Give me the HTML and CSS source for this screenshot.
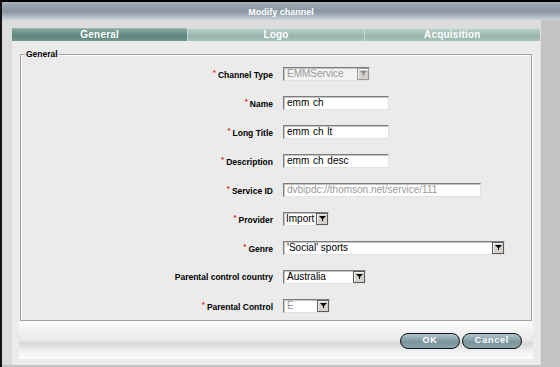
FILE: index.html
```html
<!DOCTYPE html>
<html>
<head>
<meta charset="utf-8">
<title>Modify channel</title>
<link rel="stylesheet" href="styles.css">
</head>
<body>
<div class="window">
  <div class="titlebar">Modify channel</div>
  <div class="dialog">
    <div class="tabs">
      <div class="tab active">General</div>
      <div class="tab">Logo</div>
      <div class="tab">Acquisition</div>
    </div>
    <div class="panel">
      <fieldset class="group">
        <legend>General</legend>
        <div class="form">
          <div class="label"><span class="req">*</span>Channel Type</div>
          <div class="select disabled w-type"><span class="value">EMMService</span><span class="arrow"><svg width="7" height="5" viewBox="0 0 7 5"><polygon points="0,0 7,0 3.5,3.5"/><rect x="3" y="3" width="1" height="2"/></svg></span></div>

          <div class="label"><span class="req">*</span>Name</div>
          <div class="input w-text">emm ch</div>

          <div class="label"><span class="req">*</span>Long Title</div>
          <div class="input w-text">emm ch lt</div>

          <div class="label"><span class="req">*</span>Description</div>
          <div class="input w-text">emm ch desc</div>

          <div class="label"><span class="req">*</span>Service ID</div>
          <div class="input disabled w-sid">dvbipdc://thomson.net/service/111</div>

          <div class="label"><span class="req">*</span>Provider</div>
          <div class="select w-prov"><span class="value">Import</span><span class="arrow"><svg width="7" height="5" viewBox="0 0 7 5"><polygon points="0,0 7,0 3.5,3.5"/><rect x="3" y="3" width="1" height="2"/></svg></span></div>

          <div class="label"><span class="req">*</span>Genre</div>
          <div class="select w-genre"><span class="value">'Social' sports</span><span class="arrow"><svg width="7" height="5" viewBox="0 0 7 5"><polygon points="0,0 7,0 3.5,3.5"/><rect x="3" y="3" width="1" height="2"/></svg></span></div>

          <div class="label">Parental control country</div>
          <div class="select w-country"><span class="value">Australia</span><span class="arrow"><svg width="7" height="5" viewBox="0 0 7 5"><polygon points="0,0 7,0 3.5,3.5"/><rect x="3" y="3" width="1" height="2"/></svg></span></div>

          <div class="label"><span class="req">*</span>Parental Control</div>
          <div class="select greytext w-pc"><span class="value">E</span><span class="arrow"><svg width="7" height="5" viewBox="0 0 7 5"><polygon points="0,0 7,0 3.5,3.5"/><rect x="3" y="3" width="1" height="2"/></svg></span></div>
        </div>
      </fieldset>
      <div class="buttonbar">
        <button class="pill" type="button">OK</button>
        <button class="pill" type="button">Cancel</button>
      </div>
    </div>
  </div>
</div>
</body>
</html>
```

FILE: styles.css
```css
* { box-sizing: border-box; }
html, body { margin: 0; padding: 0; }
body {
  width: 560px;
  height: 367px;
  overflow: hidden;
  background: #c3c3c3;
  font-family: "Liberation Sans", Arial, sans-serif;
}
.window {
  height: 367px;
  border-left: 2px solid #141414;
}
.titlebar {
  height: 20px;
  border-top: 2px solid #000;
  background: linear-gradient(#a6afba, #8d99a7 40%, #8c98a6 55%, #a9b2bc 75%, #ced3d8);
  color: #fff;
  font-weight: bold;
  font-size: 9px;
  line-height: 20px;
  text-align: center;
}
.dialog {
  width: 539px;
  height: 345px;
  background: #dcdcdc;
  padding: 8px 1px 0 10px;
}
.tabs {
  display: flex;
  height: 13px;
}
.tab {
  flex: 1;
  color: #fff;
  font-weight: bold;
  font-size: 10px;
  line-height: 12px;
  letter-spacing: 0.2px;
  text-align: center;
  border-top: 1px solid #d2dfdc;
  background: linear-gradient(#b9cec8, #a1bcb5 45%, #97b4ac 60%, #a9c3bc);
}
.tab + .tab { border-left: 1px solid #c9d9d5; }
.tab.active {
  border-top-color: #9ab5ae;
  background: linear-gradient(#86a79f, #658d83 45%, #5a847a 60%, #739a90);
}
.panel {
  height: 324px;
  background: #ebebeb;
  padding: 8px 8px 6px 8px;
}
.group {
  margin: 0;
  padding: 0;
  min-width: 0;
  border: 1px solid #a0a0a0;
  box-shadow: inset 1px 1px 0 #fafafa, 1px 1px 0 #fafafa;
}
.group legend {
  margin-left: 4px;
  padding: 0 1px;
  font-weight: bold;
  font-size: 8.5px;
  line-height: 10px;
  color: #000;
}
.form {
  display: grid;
  grid-template-columns: 252px 1fr;
  column-gap: 10px;
  grid-auto-rows: 29px;
  align-items: center;
}
.label {
  text-align: right;
  font-weight: bold;
  font-size: 8.5px;
  color: #000;
  white-space: nowrap;
}
.req {
  color: #e01b1b;
  font-size: 8px;
  vertical-align: 3px;
  margin-right: 2px;
}
.input, .select {
  height: 14px;
  border: 1px solid;
  border-color: #7d7d7d #e2e2e2 #e2e2e2 #7d7d7d;
  box-shadow: inset 1px 1px 0 #c4c4c4;
  background: #fff;
  font-size: 10px;
  line-height: 12px;
  color: #000;
  white-space: nowrap;
  overflow: hidden;
}
.input { padding: 0 3px; word-spacing: 1px; }
.input.disabled { color: #9a9a9a; }
.select { display: flex; }
.select .value { flex: 1; padding-left: 3px; overflow: hidden; }
.select .arrow {
  flex: none;
  width: 12px;
  height: 12px;
  background: #d4d0c8;
  border: 1px solid #5a5a5a;
  box-shadow: inset 1px 1px 0 #f4f4f4;
  display: flex;
  align-items: center;
  justify-content: center;
}
.select .arrow svg { fill: #000; display: block; }
.select.disabled { background: #f2f2f2; }
.select.disabled .value, .select.greytext .value { color: #9a9a9a; }
.select.disabled .arrow { border-color: #9a9a9a; }
.select.disabled .arrow svg { fill: #8a8a8a; }
.w-type { width: 87px; }
.w-text { width: 106px; }
.w-sid { width: 198px; }
.w-prov { width: 46px; }
.w-prov .value { padding-left: 2px; }
.w-genre { width: 222px; }
.w-country { width: 83px; }
.w-pc { width: 47px; }
.buttonbar {
  margin: 1px -1px 0;
  height: 37px;
  background: linear-gradient(#fbfbfb, #f0f0f0 30%, #e9e9e9 50%, #dadada 54%, #dcdcdc 62%, #f0f0f0 78%, #fdfdfd);
  display: flex;
  justify-content: flex-end;
  align-items: center;
  gap: 2px;
  padding-right: 11px;
}
.pill {
  width: 60px;
  height: 16px;
  padding: 0;
  margin: 0;
  border: 1.5px solid #111;
  border-radius: 8px;
  background: linear-gradient(#b3c6cc, #8aa3ab 40%, #78939c 60%, #8aa4ad);
  color: #fff;
  font-family: "Liberation Sans", Arial, sans-serif;
  font-weight: bold;
  font-size: 9px;
  letter-spacing: 0.8px;
  line-height: 13px;
  text-align: center;
}
```
